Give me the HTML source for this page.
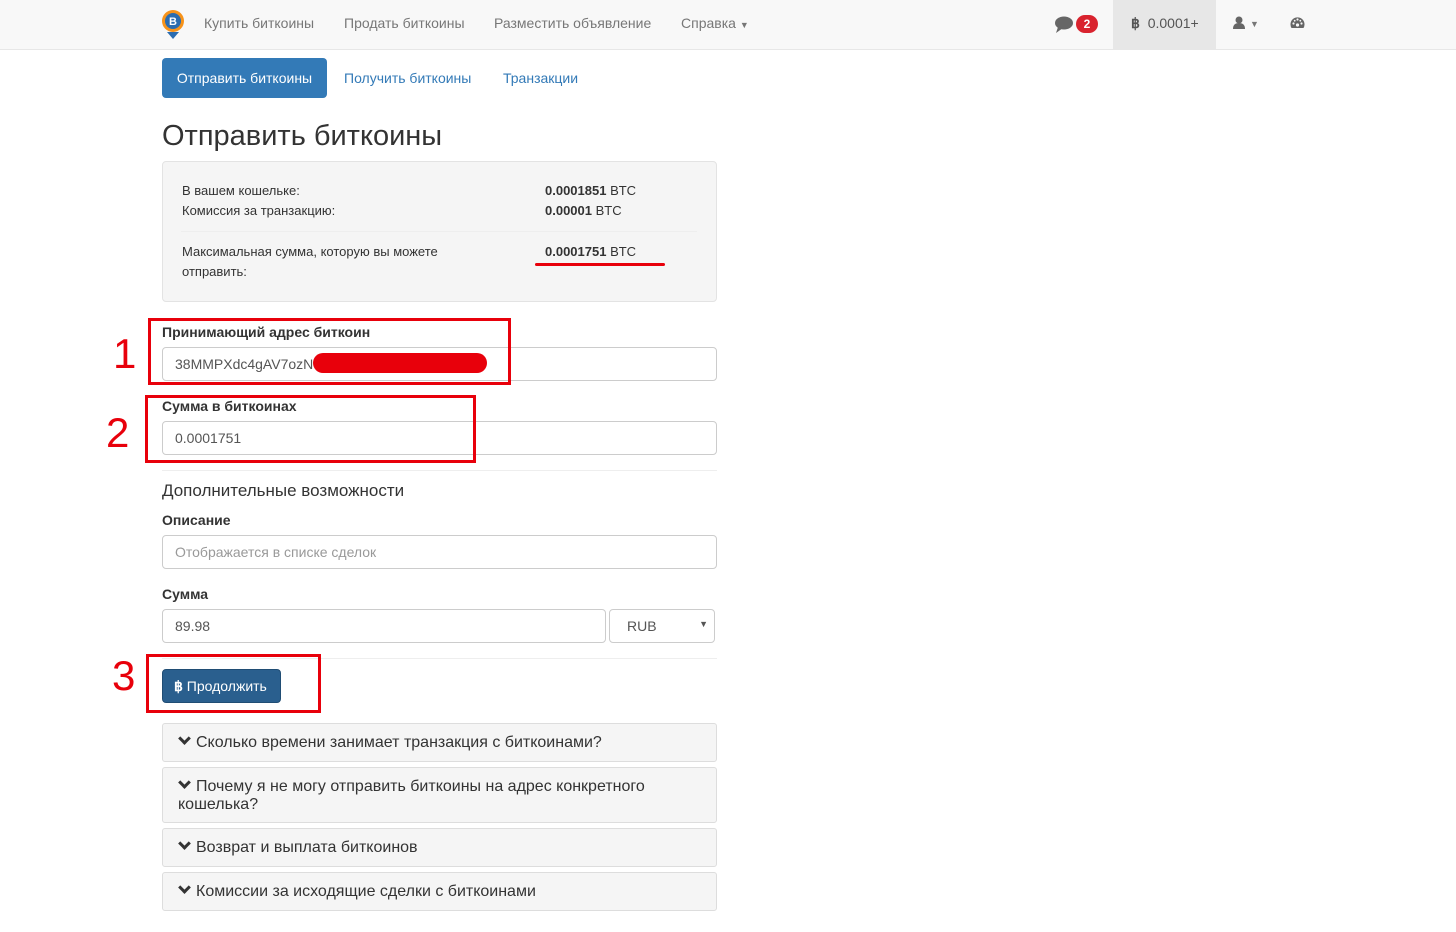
<!DOCTYPE html>
<html><head><meta charset="utf-8"><style>
*{box-sizing:border-box;margin:0;padding:0}
body{width:1456px;height:932px;background:#fff;font-family:"Liberation Sans",Arial,sans-serif;font-size:14px;color:#333;position:relative;overflow:hidden}
.a{position:absolute;white-space:nowrap}
.nav{position:absolute;left:0;top:0;width:1456px;height:50px;background:#f8f8f8;border-bottom:1px solid #e7e7e7}
.nl{color:#777;font-size:14px;top:15px}
.inp{position:absolute;height:34px;border:1px solid #ccc;border-radius:4px;background:#fff;padding:8px 12px;font-size:14px;color:#555}
.lbl{font-weight:bold;font-size:14px;color:#333}
.hr{position:absolute;height:1px;background:#eee}
.pan{position:absolute;left:162px;width:555px;background:#f5f5f5;border:1px solid #ddd;border-radius:3px;font-size:16px;color:#333;padding:10px 15px 0 15px;line-height:18px}
.red{position:absolute;border:3px solid #e8000b}
.num{position:absolute;color:#e8000b;font-size:42px;line-height:42px}
.chev{display:inline-block;width:9px;height:9px;border-right:3px solid #333;border-bottom:3px solid #333;transform:rotate(45deg);margin:0 7px 4px 2px}
</style></head><body>
<div class="nav"></div>
<svg class="a" style="left:160px;top:8px" width="26" height="32" viewBox="0 0 26 32"><circle cx="13" cy="13" r="11" fill="#f7931a"/><circle cx="13" cy="13" r="8" fill="#2b6cb0"/><text x="13" y="17" font-size="11" font-weight="bold" fill="#fff" text-anchor="middle" font-family="Liberation Sans">B</text><path d="M7 24 L19 24 L13 31 Z" fill="#2b6cb0"/></svg>
<div class="a nl" style="left:204px">Купить биткоины</div>
<div class="a nl" style="left:344px">Продать биткоины</div>
<div class="a nl" style="left:494px">Разместить объявление</div>
<div class="a nl" style="left:681px">Справка <span style="font-size:9px">▼</span></div>
<svg class="a" style="left:1054px;top:15px" width="22" height="20" viewBox="0 0 22 20"><ellipse cx="10" cy="8" rx="9" ry="6.5" fill="#666"/><path d="M4 12 L2 18 L9 13 Z" fill="#666"/></svg>
<div class="a" style="left:1076px;top:15px;width:22px;height:18px;border-radius:9px;background:#d9232e;color:#fff;font-size:12px;font-weight:bold;text-align:center;line-height:18px">2</div>
<div class="a" style="left:1113px;top:0;width:103px;height:49px;background:#e7e7e7"></div>
<div class="a nl" style="left:1131px;color:#555"><b>฿</b>&nbsp; 0.0001+</div>
<svg class="a" style="left:1233px;top:16px" width="12" height="14" viewBox="0 0 12 14"><circle cx="6" cy="4" r="3.5" fill="#666"/><path d="M0 13 Q0 7 6 7 Q12 7 12 13 Z" fill="#666"/></svg>
<div class="a nl" style="left:1250px;font-size:9px;top:19px">▼</div>
<svg class="a" style="left:1290px;top:16px" width="15" height="14" viewBox="0 0 15 14"><path d="M1.5 12 A7 7 0 1 1 13.5 12 Z" fill="#666"/><circle cx="7.5" cy="9" r="1.6" fill="#f8f8f8"/><circle cx="3.5" cy="7.5" r="1.1" fill="#f8f8f8"/><circle cx="11.5" cy="7.5" r="1.1" fill="#f8f8f8"/><circle cx="7.5" cy="3.5" r="1.1" fill="#f8f8f8"/><circle cx="4.7" cy="4.7" r="0.9" fill="#f8f8f8"/><circle cx="10.3" cy="4.7" r="0.9" fill="#f8f8f8"/></svg>

<div class="a" style="left:162px;top:58px;width:165px;height:40px;background:#337ab7;border-radius:4px;color:#fff;text-align:center;line-height:40px">Отправить биткоины</div>
<div class="a" style="left:344px;top:70px;color:#337ab7">Получить биткоины</div>
<div class="a" style="left:503px;top:70px;color:#337ab7">Транзакции</div>

<div class="a" style="left:162px;top:120px;font-size:29px;color:#333">Отправить биткоины</div>

<div class="a" style="left:162px;top:161px;width:555px;height:141px;background:#f5f5f5;border:1px solid #e3e3e3;border-radius:4px"></div>
<div class="a" style="left:182px;top:181px;font-size:13px;line-height:20px">В вашем кошельке:<br>Комиссия за транзакцию:</div>
<div class="a" style="left:545px;top:181px;font-size:13px;line-height:20px"><b>0.0001851</b> BTC<br><b>0.00001</b> BTC</div>
<div class="hr" style="left:181px;top:231px;width:516px"></div>
<div class="a" style="left:182px;top:242px;font-size:13px;line-height:20px">Максимальная сумма, которую вы можете<br>отправить:</div>
<div class="a" style="left:545px;top:242px;font-size:13px;line-height:20px"><b>0.0001751</b> BTC</div>
<div class="a" style="left:535px;top:263px;width:130px;height:3px;background:#e8000b;border-radius:2px"></div>

<div class="a lbl" style="left:162px;top:324px">Принимающий адрес биткоин</div>
<div class="inp" style="left:162px;top:347px;width:555px">38MMPXdc4gAV7ozN</div>
<div class="a" style="left:313px;top:353px;width:174px;height:20px;background:#e8000b;border-radius:10px"></div>
<div class="a lbl" style="left:162px;top:398px">Сумма в биткоинах</div>
<div class="inp" style="left:162px;top:421px;width:555px">0.0001751</div>
<div class="hr" style="left:162px;top:470px;width:555px"></div>
<div class="a" style="left:162px;top:481px;font-size:17px">Дополнительные возможности</div>
<div class="a lbl" style="left:162px;top:512px">Описание</div>
<div class="inp" style="left:162px;top:535px;width:555px;color:#999">Отображается в списке сделок</div>
<div class="a lbl" style="left:162px;top:586px">Сумма</div>
<div class="inp" style="left:162px;top:609px;width:444px">89.98</div>
<div class="inp" style="left:609px;top:609px;width:106px;padding-left:17px">RUB<span style="position:absolute;right:6px;top:9px;font-size:9px">▼</span></div>
<div class="hr" style="left:162px;top:658px;width:555px"></div>
<div class="a" style="left:162px;top:669px;width:119px;height:34px;background:#2a5f8e;border:1px solid #204d74;border-radius:4px;color:#fff;line-height:32px;padding-left:11px;font-size:14px"><b>฿</b> Продолжить</div>

<div class="pan" style="top:723px;height:39px">
<span class="chev"></span>Сколько времени занимает транзакция с биткоинами?</div>
<div class="pan" style="top:767px;height:56px;padding-top:10px">
<span class="chev"></span>Почему я не могу отправить биткоины на адрес конкретного<br>кошелька?</div>
<div class="pan" style="top:828px;height:39px">
<span class="chev"></span>Возврат и выплата биткоинов</div>
<div class="pan" style="top:872px;height:39px">
<span class="chev"></span>Комиссии за исходящие сделки с биткоинами</div>

<div class="red" style="left:148px;top:318px;width:363px;height:67px"></div>
<div class="red" style="left:145px;top:395px;width:331px;height:68px"></div>
<div class="red" style="left:146px;top:654px;width:175px;height:59px"></div>
<div class="num" style="left:113px;top:333px">1</div>
<div class="num" style="left:106px;top:412px">2</div>
<div class="num" style="left:112px;top:655px">3</div>
</body></html>
